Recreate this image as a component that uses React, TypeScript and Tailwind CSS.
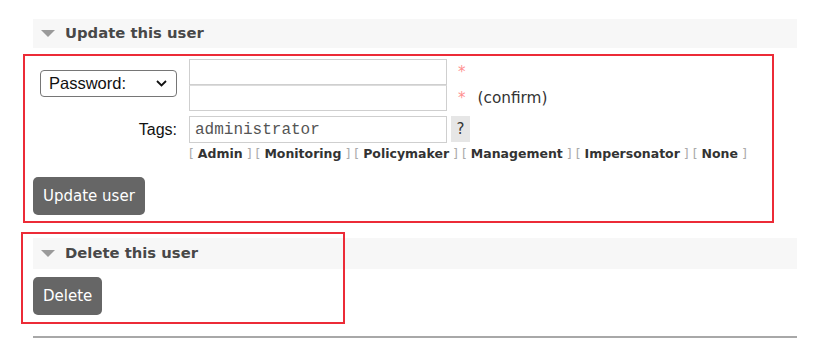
import React from "react";

const Tri = () => (
  <svg width="14" height="8" viewBox="0 0 14 8" className="shrink-0">
    <polygon points="0,0 14,0 7,7" fill="#9a9a9a" />
  </svg>
);

const SectionHeader = ({ title, h }: { title: string; h: string }) => (
  <div className={`flex items-center bg-[#f7f7f7] pl-[8px] ${h}`}>
    <Tri />
    <span className="ml-[10px] text-[14.8px] font-bold text-[#484848]">{title}</span>
  </div>
);

const tags = ["Admin", "Monitoring", "Policymaker", "Management", "Impersonator", "None"];

export default function App() {
  return (
    <div
      className="relative w-[826px] h-[358px] overflow-hidden bg-white pt-[19px] pl-[33px] pr-[29px]"
      style={{ fontFamily: '"DejaVu Sans", Verdana, sans-serif' }}
    >
      <SectionHeader title="Update this user" h="h-[29px]" />

      <div className="mt-[11px] flex flex-col">
        {/* Password rows */}
        <div className="flex">
          <div className="w-[144px] flex justify-end items-start">
            <div
              className="mt-[11px] w-[137px] h-[27px] border border-[#767676] rounded-[4px] flex items-center justify-between pl-[8px] pr-[9px] text-[16.5px] text-[#111]"
              style={{ fontFamily: '"Liberation Sans", Arial, sans-serif' }}
            >
              <span>Password:</span>
              <svg width="11" height="7" viewBox="0 0 11 7">
                <polyline points="1,1 5.5,5.5 10,1" fill="none" stroke="#111" strokeWidth="1.8" />
              </svg>
            </div>
          </div>
          <div className="ml-[12px] flex flex-col">
            <div className="flex items-center">
              <div className="w-[258px] h-[26px] border border-[#cfcfcf] bg-white" />
              <span className="ml-[11px] self-start mt-[2px] text-[15px] text-[#ff8f8f]">*</span>
            </div>
            <div className="flex items-center">
              <div className="w-[258px] h-[26px] border border-[#cfcfcf] border-t-[#dcdcdc] bg-white" />
              <span className="ml-[11px] self-start mt-[2px] text-[15px] text-[#ff8f8f]">*</span>
              <span className="ml-[12px] text-[15.3px] text-[#333]">(confirm)</span>
            </div>
          </div>
        </div>

        {/* Tags row */}
        <div className="flex mt-[5px]">
          <div
            className="w-[144px] flex justify-end items-center h-[27px] text-[16px] text-[#111]"
            style={{ fontFamily: '"Liberation Sans", Arial, sans-serif' }}
          >
            Tags:
          </div>
          <div className="ml-[12px] flex flex-col">
            <div className="flex items-start">
              <div
                className="w-[258px] h-[27px] border border-[#cfcfcf] flex items-center pl-[5px] text-[16px] text-[#555]"
                style={{ fontFamily: '"Liberation Mono", "Courier New", monospace' }}
              >
                administrator
              </div>
              <div className="ml-[4px] w-[19px] h-[26px] bg-[#e6e6e6] flex items-center justify-center text-[15px] text-[#333]">
                ?
              </div>
            </div>
            <div className="mt-[2px] flex text-[12.5px] leading-[17px] whitespace-pre">
              {tags.map((t, i) => (
                <span key={t}>
                  <span className="text-[#aaa]">{i === 0 ? "[ " : " [ "}</span>
                  <span className="font-bold text-[#333]">{t}</span>
                  <span className="text-[#aaa]"> ]</span>
                </span>
              ))}
            </div>
          </div>
        </div>

        <div className="mt-[15px]">
          <button className="h-[38px] px-[10px] rounded-[5px] bg-[#666] text-white text-[15px]">
            Update user
          </button>
        </div>
      </div>

      <div className="mt-[23px]">
        <SectionHeader title="Delete this user" h="h-[31px]" />
        <div className="mt-[8px]">
          <button className="h-[38px] px-[10px] rounded-[5px] bg-[#666] text-white text-[15px]">
            Delete
          </button>
        </div>
      </div>

      <div className="mt-[21px] h-[2px] bg-[#a8a8a8]" />

      {/* annotation boxes */}
      <div className="pointer-events-none absolute left-[23px] top-[54px] w-[751px] h-[169px] border-2 border-[#ec2b37]" />
      <div className="pointer-events-none absolute left-[21px] top-[232px] w-[324px] h-[92px] border-2 border-[#ec2b37]" />
    </div>
  );
}
